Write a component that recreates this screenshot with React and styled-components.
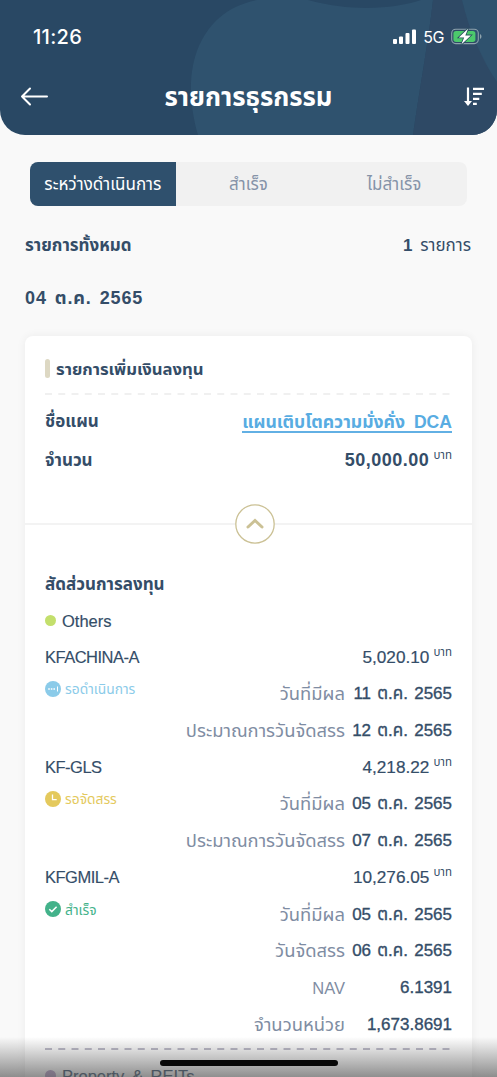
import React from 'react';
import styled, { createGlobalStyle } from 'styled-components';

const GlobalStyle = createGlobalStyle`
    * {
        box-sizing: border-box;
    }
    body {
        margin: 0;
        background: #f9f9f9;
        font-family: "Liberation Sans", "Noto Sans Thai", sans-serif;
        color: #344d68;
    }
`;

const Screen = styled.div`
    position: relative;
    width: 497px;
    height: 1077px;
    overflow: hidden;
    background: #f9f9f9;
`;

const Header = styled.header`
    position: relative;
    height: 135px;
    overflow: hidden;
    border-radius: 0 0 25px 25px;
    background: #294864;
    color: white;
`;

const Backdrop = styled.svg`
    position: absolute;
    top: 0;
    left: 0;
`;

const StatusBar = styled.div`
    position: relative;
    display: flex;
    align-items: center;
    height: 60px;
    padding: 13px 15px 0 33px;
    font-family: "Inter", sans-serif;
    .time {
        flex: 1;
        font-size: 20px;
        font-weight: 500;
        letter-spacing: 0.3px;
    }
    .network {
        margin: 0 7px 0 7px;
        font-size: 16px;
        letter-spacing: -0.4px;
    }
    svg {
        display: block;
    }
`;

const NavBar = styled.div`
    position: relative;
    display: grid;
    grid-template-columns: 60px 1fr 67px;
    align-items: center;
    height: 74px;
    padding: 0 13px 0 20px;
    h1 {
        display: flex;
        justify-content: center;
        height: 34px;
        margin: 0;
        line-height: 34px;
    }
    svg {
        display: block;
    }
    svg:last-child {
        justify-self: end;
    }
`;

const Text = styled.span`
    font-size: ${(props) => props.$size || 17}px;
    font-weight: ${(props) => props.$weight || 400};
    letter-spacing: ${(props) => props.$spacing || 0}px;
    word-spacing: ${(props) => props.$gap || 0}px;
    color: ${(props) => props.$color || 'inherit'};
    white-space: nowrap;
    -webkit-text-stroke: ${(props) => props.$stroke || 0}px;
`;

const Tabs = styled.nav`
    display: grid;
    grid-template-columns: repeat(3, 1fr);
    height: 44px;
    margin: 27px 30px 0;
    overflow: hidden;
    border-radius: 8px;
    background: #f1f1f1;
`;

const Tab = styled.button`
    display: flex;
    align-items: center;
    justify-content: center;
    padding: 2px 0 0;
    border: 0;
    font: inherit;
    background: ${(props) => (props.$active ? '#2f506d' : 'transparent')};
    color: ${(props) => (props.$active ? 'white' : '#8593a8')};
`;

const Summary = styled.div`
    display: flex;
    align-items: center;
    justify-content: space-between;
    height: 30px;
    margin: 25px 26px 0 25px;
`;

const DateHeading = styled.div`
    display: flex;
    align-items: center;
    height: 30px;
    margin: 22px 25px 0;
`;

const Card = styled.section`
    height: 800px;
    margin: 23px 25px 0;
    border-radius: 8px;
    background: white;
    box-shadow: 0 0 10px rgba(0, 0, 0, 0.06);
`;

const CardTitle = styled.div`
    display: flex;
    align-items: center;
    gap: 6px;
    height: 57px;
    margin: 0 20px;
    padding-top: 10px;
    &::before {
        content: "";
        width: 5px;
        height: 19px;
        margin-top: -3px;
        border-radius: 3px;
        background: #ddd8c3;
    }
`;

const DashedLine = styled.svg`
    display: block;
    width: 407px;
    height: 2px;
    margin: 0 20px;
`;

const Fields = styled.div`
    padding: 7px 20px 0;
`;

const Field = styled.div`
    display: flex;
    align-items: center;
    justify-content: space-between;
    height: 39px;
`;

const PlanLink = styled(Text)`
    padding-top: 2px;
    border-bottom: 2px solid #62b0e4;
    line-height: 18px;
`;

const Amount = styled.div`
    display: flex;
    align-items: center;
    gap: 4px;
    white-space: nowrap;
    sup {
        position: relative;
        top: -5px;
        font-size: 11.5px;
        font-weight: 400;
        line-height: 11px;
        vertical-align: baseline;
    }
`;

const Collapse = styled.div`
    display: flex;
    align-items: center;
    height: 40px;
    margin-top: 24px;
    &::before,
    &::after {
        content: "";
        flex: 1;
        height: 2px;
        background: #f3f3f3;
    }
    &::before {
        flex: 0 0 210px;
    }
    svg {
        display: block;
    }
`;

const SectionTitle = styled.div`
    display: flex;
    align-items: center;
    height: 30px;
    margin: 26px 20px 0;
`;

const Category = styled.div`
    display: flex;
    align-items: center;
    gap: 6px;
    height: 36px;
    margin: ${(props) => props.$top}px 20px 0;
    &::before {
        content: "";
        width: 11px;
        height: 11px;
        margin-top: -1px;
        border-radius: 50%;
        background: ${(props) => props.$dot};
    }
`;

const FundList = styled.div`
    margin-bottom: 5px;
`;

const Fund = styled.div`
    display: grid;
    grid-template-columns: 1fr auto;
    grid-auto-rows: 36.75px;
    align-items: center;
    margin: 0 20px;
    > :nth-child(2) {
        justify-self: end;
    }
`;

const Status = styled.div`
    display: flex;
    align-items: center;
    gap: 4px;
    margin-top: -11px;
    color: ${(props) => props.$color};
    span {
        padding-top: 2px;
    }
`;

const Detail = styled.div`
    grid-column: 2;
    display: flex;
    align-items: center;
    justify-content: flex-end;
    .value {
        display: flex;
        justify-content: flex-end;
        min-width: 107px;
    }
`;

const BottomShade = styled.div`
    position: absolute;
    right: 0;
    bottom: 0;
    left: 0;
    height: 40px;
    background: linear-gradient(rgba(90, 90, 90, 0), rgba(90, 90, 90, 0.68));
`;

const HomeIndicator = styled.div`
    position: absolute;
    bottom: 11px;
    left: 160px;
    width: 178px;
    height: 6px;
    border-radius: 3px;
    background: #090909;
`;

const statuses = {
    pending: { label: 'รอดำเนินการ', color: '#8bcbe9' },
    allotting: { label: 'รอจัดสรร', color: '#e4c95d' },
    success: { label: 'สำเร็จ', color: '#43b28a' },
};

const funds = [
    {
        name: 'KFACHINA-A',
        amount: '5,020.10',
        status: 'pending',
        details: [
            ['วันที่มีผล', '11 ต.ค. 2565'],
            ['ประมาณการวันจัดสรร', '12 ต.ค. 2565'],
        ],
    },
    {
        name: 'KF-GLS',
        amount: '4,218.22',
        status: 'allotting',
        details: [
            ['วันที่มีผล', '05 ต.ค. 2565'],
            ['ประมาณการวันจัดสรร', '07 ต.ค. 2565'],
        ],
    },
    {
        name: 'KFGMIL-A',
        amount: '10,276.05',
        status: 'success',
        details: [
            ['วันที่มีผล', '05 ต.ค. 2565'],
            ['วันจัดสรร', '06 ต.ค. 2565'],
            ['NAV', '6.1391'],
            ['จำนวนหน่วย', '1,673.8691'],
        ],
    },
];

const StatusIcon = ({ type }) => (
    <svg width="16" height="16" viewBox="0 0 16 16" fill="none" stroke="white">
        <circle cx="8" cy="8" r="8" fill={statuses[type].color} stroke="none" />
        {type === 'pending' && (
            <>
                <path d="M3.2 8h7.2" strokeWidth="1.5" strokeDasharray="1.6 1" />
                <path d="M12.5 5.5v5" strokeWidth="1" />
            </>
        )}
        {type === 'allotting' && <path d="M7.5 3.5v5.2h4.200" strokeWidth="1.3" />}
        {type === 'success' && <path d="m4.3 8.2 2.5 2.4 4.8-4.8" strokeWidth="1.5" />}
    </svg>
);

const Dashes = ({ color }) => (
    <DashedLine>
        <path d="M0 1h407" stroke={color} strokeWidth="1.5" strokeDasharray="7 6.25" />
    </DashedLine>
);

const App = () => {
    return (
        <Screen>
            <GlobalStyle />
            <Header>
                <Backdrop width="497" height="135" viewBox="0 0 497 135">
                    <path d="M198 135C183 83 192 38 224 14C246-2 275-5 308 0C351 12 395 9 421 0H433C428 45 420 85 413 135Z" fill="#2f526e" />
                    <path d="M433 0H462C470 28 483 60 497 82V135H413C420 85 428 45 433 0Z" fill="#2e4965" />
                    <path d="M462 0H497V82C482 60 469 30 462 0Z" fill="#2f526e" />
                </Backdrop>
                <StatusBar>
                    <div className="time">11:26</div>
                    <svg width="23" height="15" viewBox="0 0 23 15" fill="white">
                        <rect x="0" y="10" width="4" height="5" rx="1" />
                        <rect x="6" y="7.5" width="4" height="7.5" rx="1" />
                        <rect x="12.5" y="4" width="4" height="11" rx="1" />
                        <rect x="19" y="0.5" width="4" height="14.5" rx="1" />
                    </svg>
                    <div className="network">5G</div>
                    <svg width="31" height="17" viewBox="0 0 31 17" fill="none">
                        <rect x="0.7" y="1.2" width="26.6" height="14.4" rx="4" stroke="#8fa3ad" strokeWidth="1.1" />
                        <rect x="2.4" y="2.9" width="22" height="11" rx="2.6" fill="#4cc96c" />
                        <path d="M29 6v5c2-1 2-4 0-5Z" fill="#8fa3ad" />
                        <path d="M17.2 0.4 7.8 9.4h5.4l-2.9 7.2 9.6-9.200h-5.600Z" fill="white" stroke="#294f5f" strokeWidth="1.6" paintOrder="stroke" />
                    </svg>
                </StatusBar>
                <NavBar>
                    <svg width="28" height="20" viewBox="0 0 28 20" fill="none" stroke="white" strokeWidth="2" strokeLinecap="round" strokeLinejoin="round">
                        <path d="M27 9.500H2M10 1.500 2 9.500l8 8" />
                    </svg>
                    <h1>
                        <Text $size={25.7} $weight={700}>รายการธุรกรรม</Text>
                    </h1>
                    <svg width="20" height="20" viewBox="0 0 20 20" fill="none" stroke="white" strokeWidth="2.2">
                        <path d="M4 0.500v15" strokeWidth="2.200" />
                        <path d="m0 14 4 5 4-5Z" fill="white" stroke="none" />
                        <path d="M9 1.800H20M9 6.800h8.800M9 11.800h6.300M9 16.800h3.800" />
                    </svg>
                </NavBar>
            </Header>

            <Tabs>
                <Tab $active><Text $size={17}>ระหว่างดำเนินการ</Text></Tab>
                <Tab><Text $size={17}>สำเร็จ</Text></Tab>
                <Tab><Text $size={17}>ไม่สำเร็จ</Text></Tab>
            </Tabs>

            <Summary>
                <Text $weight={700}>รายการทั้งหมด</Text>
                <Text $gap={3}><b>1</b> รายการ</Text>
            </Summary>
            <DateHeading>
                <Text $size={18} $weight={700} $spacing={0.9} $gap={2}>04 ต.ค. 2565</Text>
            </DateHeading>

            <Card>
                <CardTitle>
                    <Text $size={16.7} $weight={700}>รายการเพิ่มเงินลงทุน</Text>
                </CardTitle>
                <Dashes color="#ececec" />
                <Fields>
                    <Field>
                        <Text $weight={700}>ชื่อแผน</Text>
                        <PlanLink as="a" $size={17.6} $weight={700} $gap={4} $color="#58ace2">แผนเติบโตความมั่งคั่ง DCA</PlanLink>
                    </Field>
                    <Field>
                        <Text $weight={700}>จำนวน</Text>
                        <Amount>
                            <Text $size={18} $weight={700} $spacing={0.5}>50,000.00</Text>
                            <sup>บาท</sup>
                        </Amount>
                    </Field>
                </Fields>
                <Collapse>
                    <svg width="40" height="40" viewBox="0 0 40 40" fill="none" stroke="#cbc195">
                        <circle cx="20" cy="20" r="19.200" strokeWidth="1.300" />
                        <path d="m13 23 7-6.500 7 6.500" strokeWidth="3" strokeLinecap="round" />
                    </svg>
                </Collapse>
                <SectionTitle>
                    <Text $weight={700}>สัดส่วนการลงทุน</Text>
                </SectionTitle>
                <Category $dot="#c3df6c" $top={3}>
                    <Text $size={16.5} $stroke={0.15}>Others</Text>
                </Category>
                <FundList>
                    {funds.map((fund) => (
                        <Fund key={fund.name}>
                            <Text $size={16.5} $spacing={-0.5} $stroke={0.15}>{fund.name}</Text>
                            <Amount>
                                <Text $size={17.2} $stroke={0.2}>{fund.amount}</Text>
                                <sup>บาท</sup>
                            </Amount>
                            <Status $color={statuses[fund.status].color}>
                                <StatusIcon type={fund.status} />
                                <Text $size={13.8}>{statuses[fund.status].label}</Text>
                            </Status>
                            {fund.details.map(([label, value]) => (
                                <Detail key={label}>
                                    <Text $size={label === 'NAV' ? 16.5 : 18.4} $color="#7f8da3">{label}</Text>
                                    <div className="value">
                                        <Text $size={17} $gap={1.5} $stroke={0.35}>{value}</Text>
                                    </div>
                                </Detail>
                            ))}
                        </Fund>
                    ))}
                </FundList>
                <Dashes color="#a7a4b8" />
                <Category $dot="#b39ac5" $top={8}>
                    <Text $size={16.5} $gap={3} $stroke={0.15}>Property & REITs</Text>
                </Category>
            </Card>
            <BottomShade />
            <HomeIndicator />
        </Screen>
    );
};

export default App;
